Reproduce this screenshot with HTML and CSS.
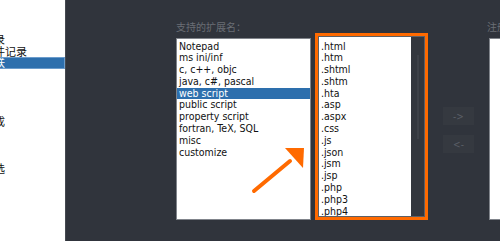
FILE: index.html
```html
<!DOCTYPE html>
<html lang="zh-CN">
<head>
<meta charset="UTF-8">
<title>首选项 - 文件关联</title>
<link rel="stylesheet" href="styles.css">
</head>
<body>
  <aside class="side">
    <ul class="side-list">
      <li>默认目录</li>
      <li>最近文件记录</li>
      <li class="active">文件关联</li>
      <li>语言</li>
      <li>高亮</li>
      <li>打印</li>
      <li>备份</li>
      <li>自动完成</li>
      <li>多实例</li>
      <li>分隔符</li>
      <li>云同步</li>
      <li>文本筛选</li>
      <li>其他</li>
    </ul>
  </aside>

  <main class="main">
    <div class="col col-lang">
      <div class="label">支持的扩展名：</div>
      <ul class="listbox lang-list">
        <li>Notepad</li>
        <li>ms ini/inf</li>
        <li>c, c++, objc</li>
        <li>java, c#, pascal</li>
        <li class="active">web script</li>
        <li>public script</li>
        <li>property script</li>
        <li>fortran, TeX, SQL</li>
        <li>misc</li>
        <li>customize</li>
      </ul>
    </div>

    <div class="col col-ext">
      <div class="highlight">
        <div class="ext-box">
          <ul class="ext-list">
            <li>.html</li>
            <li>.htm</li>
            <li>.shtml</li>
            <li>.shtm</li>
            <li>.hta</li>
            <li>.asp</li>
            <li>.aspx</li>
            <li>.css</li>
            <li>.js</li>
            <li>.json</li>
            <li>.jsm</li>
            <li>.jsp</li>
            <li>.php</li>
            <li>.php3</li>
            <li>.php4</li>
          </ul>
          <div class="scrollbar"><div class="thumb"></div></div>
        </div>
      </div>
    </div>

    <div class="col col-btns">
      <button class="move-btn">-&gt;</button>
      <button class="move-btn">&lt;-</button>
    </div>

    <div class="col col-reg">
      <div class="label">注册的扩展名：</div>
      <ul class="listbox reg-list"></ul>
    </div>

    <svg class="pointer" width="70" height="60" viewBox="0 0 70 60">
      <line x1="4" y1="50" x2="40" y2="20" stroke="#ff6a00" stroke-width="4" stroke-linecap="round"/>
      <polygon points="35,7 54,7 53,27" fill="#ff6a00"/>
    </svg>
  </main>
</body>
</html>
```

FILE: styles.css
```css
* {
  box-sizing: border-box;
}
body {
  margin: 0;
  height: 241px;
  display: flex;
  overflow: hidden;
  font-family: "DejaVu Sans", "Noto Sans CJK SC", sans-serif;
  font-stretch: condensed;
  font-size: 10.5px;
  background: #30343c;
}
ul {
  list-style: none;
  margin: 0;
  padding: 0;
}
li {
  white-space: nowrap;
}

/* left category list, scrolled so only the ends show */
.side {
  width: 66px;
  background: #fff;
  border-right: 1px solid #454950;
  overflow: hidden;
  flex-shrink: 0;
}
.side-list {
  margin-top: 34px;
  margin-left: -41px;
  font-family: "Noto Sans CJK SC", sans-serif;
  font-size: 11px;
  color: #111;
}
.side-list li {
  height: 11.7px;
  line-height: 11.7px;
  padding-left: 2px;
  overflow: hidden;
}
.side-list li.active {
  background: #2d6fad;
  color: #fff;
  outline: 1px solid #6b9ccc;
  outline-offset: -1px;
}

.main {
  flex: 1;
  position: relative;
  display: flex;
  align-items: flex-start;
  padding: 19px 0 0 110px;
}
.col {
  flex-shrink: 0;
}
.label {
  height: 19px;
  line-height: 16px;
  font-family: "Noto Sans CJK SC", sans-serif;
  font-size: 10px;
  color: #6a6e75;
  white-space: nowrap;
}
.listbox {
  background: #fff;
  border: 1px solid #80848b;
  height: 182px;
}

.col-lang {
  width: 135px;
}
.lang-list {
  padding: 1.5px 0 0 0;
  color: #111;
}
.lang-list li {
  height: 11.8px;
  line-height: 11.8px;
  padding-left: 2px;
}
.lang-list li.active {
  background: #2d6fad;
  color: #fff;
}

.col-ext {
  margin-left: 4px;
  margin-top: 14px;
}
.highlight {
  width: 113px;
  height: 187px;
  border: 3px solid #ff6a00;
}
.ext-box {
  height: 100%;
  display: flex;
  border: 1px solid #5c6067;
}
.ext-list {
  flex: 1;
  background: #fff;
  padding: 3.5px 0 0 2px;
  color: #111;
  overflow: hidden;
}
.ext-list li {
  height: 11.8px;
  line-height: 11.8px;
}
.scrollbar {
  width: 13px;
  background: #33373e;
  padding-top: 18px;
}
.thumb {
  width: 2px;
  height: 84px;
  margin-left: 6px;
  background: #3d4148;
}

.col-btns {
  margin-left: 15px;
  margin-top: 88px;
  display: flex;
  flex-direction: column;
  gap: 10px;
}
.move-btn {
  width: 31px;
  height: 18px;
  padding: 0;
  border: none;
  background: #353940;
  color: #5a5e66;
  font-family: "DejaVu Sans", sans-serif;
  font-stretch: condensed;
  font-size: 10px;
}

.col-reg {
  margin-left: 13px;
  width: 60px;
}
.reg-list {
  margin-left: 2px;
}

.pointer {
  position: absolute;
  left: 184px;
  top: 141px;
}
```
